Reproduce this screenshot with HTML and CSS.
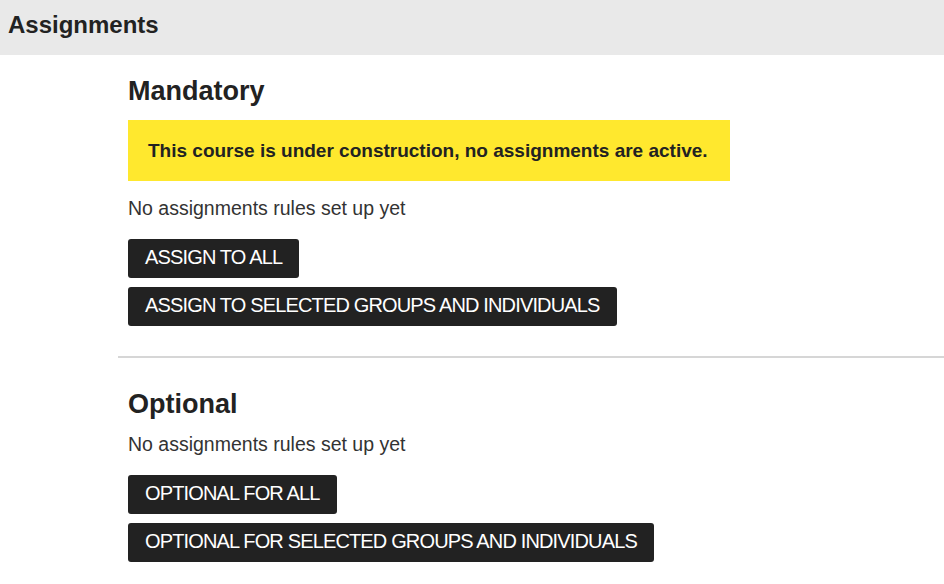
FILE: index.html
```html
<!DOCTYPE html>
<html lang="en">

<head>
  <meta charset="UTF-8" />
  <title>Assignments</title>
  <link rel="stylesheet" href="styles.css">
</head>

<body>
  <!-- Page Header -->
  <div class="page-header">
    <h1>Assignments</h1>
  </div>

  <!-- Mandatory Section -->
  <div class="section section-mandatory">
    <h2>Mandatory</h2>
    <div class="notice">This course is under construction, no assignments are active.</div>
    <p class="empty">No assignments rules set up yet</p>
    <div class="actions">
      <button class="btn">ASSIGN TO ALL</button>
      <button class="btn">ASSIGN TO SELECTED GROUPS AND INDIVIDUALS</button>
    </div>
  </div>

  <hr class="divider" />

  <!-- Optional Section -->
  <div class="section section-optional">
    <h2>Optional</h2>
    <p class="empty">No assignments rules set up yet</p>
    <div class="actions">
      <button class="btn">OPTIONAL FOR ALL</button>
      <button class="btn">OPTIONAL FOR SELECTED GROUPS AND INDIVIDUALS</button>
    </div>
  </div>
</body>

</html>
```

FILE: styles.css
```css
/* General Styles */
body {
  font-family: "Liberation Sans", Arial, sans-serif;
  margin: 0;
  padding: 0;
  background-color: #ffffff;
  color: #222;
}

/* Header */
.page-header {
  background-color: #e9e9e9;
  height: 55px;
  box-sizing: border-box;
  display: flex;
  align-items: center;
  padding: 0 0 5px 8px;
}

.page-header h1 {
  margin: 0;
  font-size: 24px;
  font-weight: bold;
  color: #222;
}

/* Sections */
.section {
  padding-left: 128px;
}

.section h2 {
  margin: 0;
  font-size: 27px;
  line-height: 32px;
  font-weight: bold;
  color: #222;
}

.section-mandatory {
  padding-top: 20px;
}

.notice {
  width: 562px;
  margin-top: 13px;
  padding: 20px;
  background-color: #ffe82e;
  font-size: 19px;
  font-weight: bold;
  color: #222;
  line-height: 21px;
}

.empty {
  margin: 16px 0 0 0;
  font-size: 19.5px;
  color: #333;
  line-height: 22px;
}

.section-optional .empty {
  margin-top: 13px;
}

.actions {
  display: flex;
  flex-direction: column;
  align-items: flex-start;
  gap: 9px;
  margin-top: 20px;
}

.btn {
  background-color: #222;
  color: #fff;
  border: none;
  border-radius: 3px;
  padding: 0 17px 2px 17px;
  height: 39px;
  font-family: "Liberation Sans", Arial, sans-serif;
  font-size: 20px;
  letter-spacing: -0.85px;
  cursor: pointer;
}

/* Divider */
.divider {
  border: none;
  border-top: 2px solid #d6d6d6;
  margin: 30px 0 30px 118px;
}
```
